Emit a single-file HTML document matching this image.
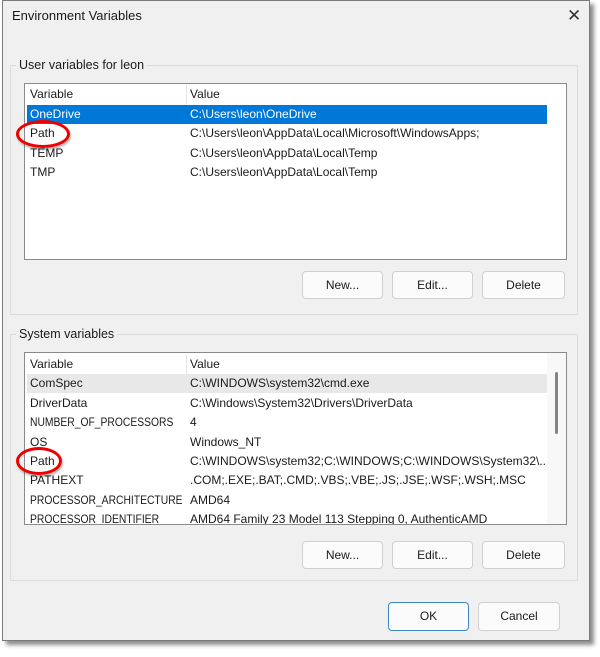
<!DOCTYPE html>
<html><head><style>
*{margin:0;padding:0;box-sizing:border-box}
body{width:600px;height:657px;background:#fff;font-family:"Liberation Sans",sans-serif;font-size:12px;color:#1a1a1a;position:relative;overflow:hidden}
.dlg{position:absolute;left:2px;top:0;width:588px;height:641px;background:#f0f0f0;border:1px solid #7a7a7a;box-shadow:4px 4px 4px rgba(0,0,0,.45)}
.a{position:absolute}
.title{left:9px;top:7px;font-size:13px}
.x{left:564px;top:5px;font-size:17px;color:#333}
.grp{border:1px solid #dcdcdc}
.lbl{font-size:12.5px;background:#f0f0f0;padding:0 3px}
.list{background:#fff;border:1px solid #8a8a8a;overflow:hidden}
.row{position:absolute;left:2px;height:19px;width:520px;line-height:19px}
.row span{position:absolute;left:3px;white-space:nowrap}
.row span.n{transform:scaleX(.86);transform-origin:left center}
.row b{font-weight:normal;position:absolute;left:163px;white-space:nowrap}
.btn{background:#fbfbfb;border:1px solid #d0d0d0;border-radius:4px;text-align:center;line-height:26px;font-size:12px}
.ring{position:absolute;border:3px solid #e00;border-radius:50%;box-shadow:1px 2px 2px rgba(0,0,0,.3)}
</style></head><body>
<div class="dlg">
<div class="a title">Environment Variables</div>
<div class="a x">✕</div>

<div class="a grp" style="left:7px;top:64px;width:568px;height:250px"></div>
<div class="a lbl" style="left:13px;top:57px">User variables for leon</div>
<div class="a list" style="left:21px;top:82px;width:543px;height:177px">
 <div class="row" style="top:1px"><span>Variable</span><b>Value</b></div>
 <div class="a" style="left:161px;top:1px;width:1px;height:19px;background:#e5e5e5"></div>
 <div class="row" style="top:21px;width:520px;background:#0078d7;color:#fff"><span>OneDrive</span><b>C:\Users\leon\OneDrive</b></div>
 <div class="row" style="top:40px"><span>Path</span><b>C:\Users\leon\AppData\Local\Microsoft\WindowsApps;</b></div>
 <div class="row" style="top:60px"><span>TEMP</span><b>C:\Users\leon\AppData\Local\Temp</b></div>
 <div class="row" style="top:79px"><span>TMP</span><b>C:\Users\leon\AppData\Local\Temp</b></div>
</div>
<div class="a btn" style="left:299px;top:270px;width:81px;height:28px">New...</div>
<div class="a btn" style="left:389px;top:270px;width:81px;height:28px">Edit...</div>
<div class="a btn" style="left:479px;top:270px;width:83px;height:28px">Delete</div>

<div class="a grp" style="left:7px;top:333px;width:568px;height:247px"></div>
<div class="a lbl" style="left:13px;top:326px">System variables</div>
<div class="a list" style="left:21px;top:351px;width:543px;height:173px">
 <div class="row" style="top:2px"><span>Variable</span><b>Value</b></div>
 <div class="a" style="left:161px;top:2px;width:1px;height:19px;background:#e5e5e5"></div>
 <div class="row" style="top:21px;background:#e8e8e8"><span>ComSpec</span><b>C:\WINDOWS\system32\cmd.exe</b></div>
 <div class="row" style="top:41px"><span>DriverData</span><b>C:\Windows\System32\Drivers\DriverData</b></div>
 <div class="row" style="top:60px"><span class="n">NUMBER_OF_PROCESSORS</span><b>4</b></div>
 <div class="row" style="top:80px"><span>OS</span><b>Windows_NT</b></div>
 <div class="row" style="top:99px"><span>Path</span><b>C:\WINDOWS\system32;C:\WINDOWS;C:\WINDOWS\System32\...</b></div>
 <div class="row" style="top:118px"><span>PATHEXT</span><b>.COM;.EXE;.BAT;.CMD;.VBS;.VBE;.JS;.JSE;.WSF;.WSH;.MSC</b></div>
 <div class="row" style="top:138px"><span class="n">PROCESSOR_ARCHITECTURE</span><b>AMD64</b></div>
 <div class="row" style="top:157px"><span class="n">PROCESSOR_IDENTIFIER</span><b>AMD64 Family 23 Model 113 Stepping 0, AuthenticAMD</b></div>
 <div class="a" style="left:522px;top:0;width:19px;height:173px;background:#f8f8f8"></div>
 <div class="a" style="left:530px;top:19px;width:3px;height:62px;background:#858585;border-radius:2px"></div>
</div>
<div class="a btn" style="left:299px;top:540px;width:81px;height:28px">New...</div>
<div class="a btn" style="left:389px;top:540px;width:81px;height:28px">Edit...</div>
<div class="a btn" style="left:479px;top:540px;width:83px;height:28px">Delete</div>

<div class="a btn" style="left:385px;top:601px;width:81px;height:29px;border:1px solid #3c86c8">OK</div>
<div class="a btn" style="left:475px;top:601px;width:82px;height:29px">Cancel</div>
</div>
<div class="ring" style="left:16px;top:120px;width:54px;height:28px"></div>
<div class="ring" style="left:16px;top:447px;width:46px;height:28px"></div>
</body></html>
